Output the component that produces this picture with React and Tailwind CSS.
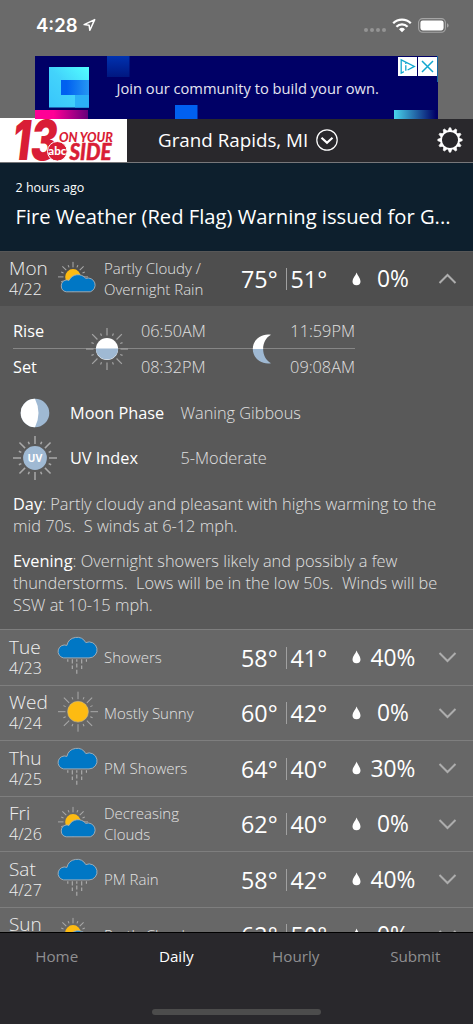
const days = [
  { day: 'Tue', date: '4/23', icon: 'rain', text: 'Showers', high: 58, low: 41, rain: 40 },
  { day: 'Wed', date: '4/24', icon: 'sun', text: 'Mostly Sunny', high: 60, low: 42, rain: 0 },
  { day: 'Thu', date: '4/25', icon: 'rain', text: 'PM Showers', high: 64, low: 40, rain: 30 },
  { day: 'Fri', date: '4/26', icon: 'partly', text: 'Decreasing Clouds', high: 62, low: 40, rain: 0 },
  { day: 'Sat', date: '4/27', icon: 'rain', text: 'PM Rain', high: 58, low: 42, rain: 40 },
  { day: 'Sun', date: '4/28', icon: 'partly', text: 'Partly Cloudy', high: 62, low: 50, rain: 0 },
]

const today = { day: 'Mon', date: '4/22', icon: 'partly', text: 'Partly Cloudy / Overnight Rain', high: 75, low: 51, rain: 0 }

const tabs = ['Home', 'Daily', 'Hourly', 'Submit']

function Rays({ cx, cy, inner, outer, short, width = 1, color = '#a9a9a9' }) {
  return (
    <g stroke={color} strokeWidth={width}>
      {Array.from({ length: 16 }, (_, i) => {
        const from = i % 2 ? inner + 0.8 : inner
        const to = i % 2 ? short : outer
        return (
          <line key={i} x1={cx} y1={cy - from} x2={cx} y2={cy - to} transform={`rotate(${i * 22.5} ${cx} ${cy})`} />
        )
      })}
    </g>
  )
}

function WeatherIcon({ type }) {
  return (
    <svg className="-mt-[2px]" width="42" height="55" viewBox="0 0 42 55" fill="none">
      {type === 'rain' && (
        <g transform="translate(0 -.6)">
          <path
            d="M7.6 29.5A6.5 6.5 0 1 1 10.9 17A10.2 10.2 0 0 1 29.8 14.2A8 8 0 1 1 33 29.5Z"
            fill="#0077c5"
            stroke="#a9b1b8"
            strokeWidth="0.9"
          />
          <g stroke="#b0b0b0" strokeWidth="1.1">
            <path d="M11.8 30.8v2.5M30.4 30.8v2.5" />
            <path d="M16.3 30.8v4.4M16.3 37v3.5M25.7 30.8v4.4M25.7 37v3.5" />
            <path d="M20.8 30.8v2.5M20.8 35v4M20.8 41.4v4" />
          </g>
        </g>
      )}
      {type === 'sun' && (
        <>
          <Rays cx={22} cy={27.7} inner={12.5} outer={20} short={15.8} />
          <circle cx="22" cy="27.7" r="10.4" fill="#fdbb12" stroke="#c9b98c" strokeWidth="0.6" />
        </>
      )}
      {type === 'partly' && (
        <g transform="translate(0 .6)">
          <Rays cx={17} cy={26.3} inner={9.5} outer={15} short={12.8} />
          <circle cx="17" cy="26.3" r="7.8" fill="#fdbb12" />
          <path
            d="M10.2 41.2A6 6 0 0 1 10.2 29.4Q11.8 29.2 13 29.8A10 10 0 0 1 29.8 27.8A7 7 0 1 1 34.3 41.2Z"
            fill="#0077c5"
            stroke="#a9b1b8"
            strokeWidth="0.9"
          />
        </g>
      )}
    </svg>
  )
}

function DayRow({ item, open }) {
  return (
    <div
      className={
        open
          ? 'flex h-[55.5px] shrink-0 items-center border-t border-[#575757] bg-[#4e4e4e]'
          : 'flex h-[55.5px] shrink-0 items-center border-t border-[#7e7e7e] bg-[#676767]'
      }
    >
      <div className="w-[56px] pt-[1px] pl-[9px] font-light text-[#f0f0f0]">
        <div className="text-[19px] leading-[21px]">{item.day}</div>
        <div className="text-[16px] leading-[21px]">{item.date}</div>
      </div>
      <WeatherIcon type={item.icon} />
      <div className="ml-[6px] w-[122px] pr-4 text-[15px] leading-[20.5px] font-light text-[#e2e2e2]">{item.text}</div>
      <div className="flex w-[126px] items-center pt-[1px] pl-[15px] text-[23.3px] leading-8 text-white">
        <span className="w-[44.5px]">{item.high}°</span>
        <span className="mr-[4px] h-[22px] w-px bg-[#a0a0a0]" />
        <span>{item.low}°</span>
      </div>
      <svg width="9" height="14" viewBox="0 0 9 14" fill="#fff">
        <path d="M4.6.6C5.4 3.6 8.5 6.3 8.5 9.3a4 4 0 0 1-8 0C.5 6.3 3.8 3.6 4.6.6Z" />
      </svg>
      <div className="w-16 pt-[1px] text-center text-[22.8px] leading-8 text-white">{item.rain}%</div>
      <svg className="ml-[13px]" width="19" height="12" viewBox="0 0 19 12" fill="none" stroke="#adadad" strokeWidth="2">
        <path d={open ? 'M1.5 10 9.5 2l8 8' : 'M1.5 2l8 8 8-8'} />
      </svg>
    </div>
  )
}

function StatusBar() {
  return (
    <div className="flex h-[56px] items-center justify-between pr-[24px] pl-[36px]">
      <div className="flex items-center gap-[5px] pb-[6px]">
        <span className="font-['Inter'] text-[18.5px] leading-6 font-semibold text-white">4:28</span>
        <svg width="13" height="14" viewBox="0 0 14 14" fill="none" stroke="#fff" strokeWidth="1.6" strokeLinejoin="round">
          <path d="M12.6 1.2 1.2 6.6l5.4.7.8 5.4Z" />
        </svg>
      </div>
      <div className="flex items-center pb-[5px]">
        <div className="mt-[9px] mr-[6px] flex gap-[2px]">
          {[0, 1, 2, 3].map((n) => (
            <span key={n} className="size-[4px] rounded-full bg-[#949494]" />
          ))}
        </div>
        <svg width="20" height="15" viewBox="0 0 20 15" fill="none" stroke="#fff" strokeWidth="2.3">
          <path d="M1.2 5.3a12.6 12.6 0 0 1 17.6 0" />
          <path d="M4.4 8.7a8 8 0 0 1 11.2 0" />
          <path d="M7 11.3a4.3 4.3 0 0 1 6 0L10 14.3Z" fill="#fff" stroke="none" />
        </svg>
        <svg className="ml-[6px]" width="31" height="15" viewBox="0 0 31 15" fill="none">
          <rect x=".6" y=".6" width="26.8" height="13.6" rx="4" stroke="#a5a5a5" strokeWidth="1.1" />
          <rect x="2.4" y="2.4" width="23.2" height="10" rx="2.3" fill="#fff" />
          <path d="M29 5.2q1.6.5 1.6 2.2T29 9.6Z" fill="#a5a5a5" />
        </svg>
      </div>
    </div>
  )
}

function AdBanner() {
  return (
    <div className="relative ml-[35px] flex h-[62.5px] w-[403px] items-center overflow-hidden bg-[#000066]">
      <svg className="absolute inset-0" width="403" height="63" viewBox="0 0 403 63">
        <defs>
          <linearGradient id="box" x1="0" y1="1" x2="1" y2="0">
            <stop offset="0" stopColor="#38c5fb" />
            <stop offset=".5" stopColor="#43d3fb" />
            <stop offset="1" stopColor="#52ffff" />
          </linearGradient>
          <linearGradient id="inner">
            <stop offset=".2" stopColor="#0060f0" />
            <stop offset="1" stopColor="#2697f3" />
          </linearGradient>
          <linearGradient id="pink">
            <stop offset=".35" stopColor="#ff0096" />
            <stop offset="1" stopColor="#66007a" />
          </linearGradient>
          <linearGradient id="navy" x1="0" y1="0" x2="0" y2="1">
            <stop offset="0" stopColor="#0032b0" />
            <stop offset="1" stopColor="#001780" />
          </linearGradient>
          <linearGradient id="teal">
            <stop offset="0" stopColor="#48d4ec" />
            <stop offset="1" stopColor="#000066" />
          </linearGradient>
        </defs>
        <rect x="14" y="11" width="40" height="40.5" fill="url(#box)" />
        <rect x="40" y="39" width="14" height="12.5" fill="#2bb0f7" />
        <rect x="26" y="24" width="28" height="15" fill="url(#inner)" />
        <rect x="0" y="54" width="53" height="9" fill="url(#pink)" />
        <rect x="72" y="0" width="22.5" height="21" fill="url(#navy)" />
        <rect x="140" y="49" width="22.5" height="14" fill="#0060f0" />
        <rect x="359" y="54" width="42" height="9" fill="url(#teal)" />
        <path d="M402.5 0v26" stroke="#1267a4" />
      </svg>
      <span className="relative ml-[81.5px] pt-[1px] text-[14.7px] whitespace-nowrap text-[#e4e4f0]">
        Join our community to build your own.
      </span>
      <div className="absolute top-[1px] right-[1px] flex gap-[1px]">
        <svg className="bg-white" width="19" height="19" viewBox="0 0 19 19" fill="none" stroke="#12a7cf" strokeWidth="1.3">
          <path d="M5.8 14.6 3.2 16.2V2.8L16.4 9.4 9.6 13" />
          <path d="M7.8 8.2v5.6M7.8 5.4v1.6" />
        </svg>
        <svg className="bg-white" width="19" height="19" viewBox="0 0 19 19" fill="none" stroke="#12a7cf" strokeWidth="1.5">
          <path d="M4 4l11 11M15 4 4 15" />
        </svg>
      </div>
    </div>
  )
}

function Logo() {
  return (
    <svg className="bg-white" width="126.5" height="44" viewBox="0 0 126.5 44" fill="#d91e36">
      <text
        x="12.5"
        y="42.3"
        fontSize="55"
        fontFamily="Inter"
        fontWeight="900"
        fontStyle="italic"
        textLength="45"
        lengthAdjust="spacingAndGlyphs"
      >
        13
      </text>
      <g fontFamily="Lato" fontWeight="900" fontStyle="italic">
        <text x="59" y="23.5" fontSize="12.5" textLength="54" lengthAdjust="spacingAndGlyphs">
          ON YOUR
        </text>
        <text x="69.5" y="41.5" fontSize="23" textLength="42" lengthAdjust="spacingAndGlyphs" stroke="#d91e36" strokeWidth=".5">
          SIDE
        </text>
      </g>
      <circle cx="57.3" cy="33.3" r="9.8" stroke="#fff" strokeWidth="1" />
      <text x="57.3" y="36.7" fontSize="11.5" fontFamily="Lato" fontWeight="900" fill="#fff" textAnchor="middle">
        abc
      </text>
    </svg>
  )
}

function Header() {
  return (
    <div className="flex h-[44.5px] items-center border-b border-[#77777a] bg-[#29282c]">
      <Logo />
      <div className="ml-[31.5px] w-[149px] text-[18.8px] leading-6 whitespace-nowrap text-white">Grand Rapids, MI</div>
      <svg className="ml-[9px]" width="22" height="22" viewBox="0 0 22 22" fill="none" stroke="#fff">
        <circle cx="11" cy="11" r="10.2" strokeWidth="1.2" />
        <path d="M5.5 8.8 11 13.8l5.5-5" strokeWidth="2.2" />
      </svg>
      <svg className="mr-[10px] ml-auto" width="26" height="26" viewBox="0 0 26 26" fill="none" stroke="#fff">
        <circle cx="13" cy="13" r="9" strokeWidth="1.9" />
        {Array.from({ length: 12 }, (_, i) => (
          <path key={i} d="M11.1 4 12.2.8h1.6L14.9 4Z" fill="#fff" strokeWidth=".6" transform={`rotate(${i * 30} 13 13)`} />
        ))}
      </svg>
    </div>
  )
}

function Details() {
  return (
    <div className="h-[323px] shrink-0 bg-[#595959] px-[13px] pt-[14px] text-[16.3px] font-light text-[#e0e0e0]">
      <div className="relative w-[342px]">
        <div className="grid h-[28.5px] grid-cols-[128px_1fr_auto] border-b border-[#868686] leading-[22px]">
          <span className="font-normal text-white">Rise</span>
          <span>06:50AM</span>
          <span>11:59PM</span>
        </div>
        <div className="grid h-[36px] grid-cols-[128px_1fr_auto] pt-[7.5px] leading-[22px]">
          <span className="font-normal text-white">Set</span>
          <span>08:32PM</span>
          <span>09:08AM</span>
        </div>
        {/* sun and moon sit over the horizon line */}
        <svg className="absolute top-[7px] left-[72px]" width="44" height="44" viewBox="0 0 44 44">
          <Rays cx={22} cy={22} inner={13.5} outer={21} short={16.8} width={1.2} color="#a3a3a3" />
          <circle cx="22" cy="22" r="11.1" fill="#fff" />
          <path d="M10.9 21.5h22.2a11.1 11.1 0 0 1-22.2 0Z" fill="#9fb9d3" />
        </svg>
        <svg className="absolute top-[14px] left-[239px]" width="20" height="30" viewBox="0 0 20 30">
          <defs>
            <linearGradient id="moon" x1="0" y1="0" x2="0" y2="1">
              <stop offset=".5" stopColor="#fff" />
              <stop offset=".5" stopColor="#9fb9d3" />
            </linearGradient>
          </defs>
          <path d="M19 .8C9-.8.8 6 .8 15S9 30.8 19 29.2C8.5 23.5 8.5 6.5 19 .8Z" fill="url(#moon)" />
        </svg>
      </div>
      <div className="mt-[5px] flex h-[47px] items-center">
        <svg className="ml-[7px]" width="30" height="30" viewBox="0 0 30 30">
          <circle cx="15" cy="15" r="14.3" fill="#9fb9d3" />
          <path d="M15 .7a14.3 14.3 0 0 0 0 28.6Q22 15 15 .7Z" fill="#fff" />
        </svg>
        <span className="ml-5 w-[110.5px] pt-[1px] font-normal text-white">Moon Phase</span>
        <span className="pt-[1px]">Waning Gibbous</span>
      </div>
      <div className="flex h-[42px] items-center">
        <svg width="44" height="44" viewBox="0 0 44 44">
          <Rays cx={22} cy={22} inner={14} outer={22} short={17.5} width={1.5} color="#a9a9a9" />
          <circle cx="22" cy="22" r="11.9" fill="#9fb9d3" />
          <text x="22" y="25.7" fontSize="10.5" fontWeight="700" textAnchor="middle" fill="#fff">
            UV
          </text>
        </svg>
        <span className="ml-[13px] w-[110.5px] pt-[1.5px] font-normal text-white">UV Index</span>
        <span className="pt-[1.5px]">5-Moderate</span>
      </div>
      <p className="mt-[14px] text-[16.38px] leading-[22.2px] whitespace-pre">
        <span className="font-normal text-white">Day</span>
        {': Partly cloudy and pleasant with highs warming to the\nmid 70s.  S winds at 6-12 mph.'}
      </p>
      <p className="mt-[13px] text-[16.38px] leading-[22.2px] whitespace-pre">
        <span className="font-normal text-white">Evening</span>
        {': Overnight showers likely and possibly a few\nthunderstorms.  Lows will be in the low 50s.  Winds will be\nSSW at 10-15 mph.'}
      </p>
    </div>
  )
}

export default function App() {
  return (
    <div className="flex h-[1024px] w-[473px] flex-col overflow-hidden bg-[#6a6a6a] font-['Open_Sans',sans-serif]">
      <StatusBar />
      <AdBanner />
      <Header />
      <div className="h-[87.5px] bg-[#0d1f2d] px-[15.5px] text-white">
        <div className="pt-[16px] text-[12.5px] leading-[18px]">2 hours ago</div>
        <div className="mt-[5px] text-[20.2px] leading-7 whitespace-nowrap">Fire Weather (Red Flag) Warning issued for G...</div>
      </div>
      <div className="flex h-[681.5px] flex-col overflow-hidden">
        <DayRow item={today} open />
        <Details />
        {days.map((item) => (
          <DayRow key={item.date} item={item} />
        ))}
      </div>
      <nav className="flex flex-1 flex-col border-t border-black bg-[#29282c]">
        <ul className="-ml-[3px] grid w-[478px] grid-cols-4 pt-[11px] text-center text-[15.2px] leading-6">
          {tabs.map((tab) => (
            <li key={tab} className={tab === 'Daily' ? 'text-white' : 'text-[#8f8f91]'}>
              {tab}
            </li>
          ))}
        </ul>
        <div className="mx-auto mt-auto mb-[9px] h-[6px] w-[169px] rounded-full bg-[#4c4c4c]" />
      </nav>
    </div>
  )
}
